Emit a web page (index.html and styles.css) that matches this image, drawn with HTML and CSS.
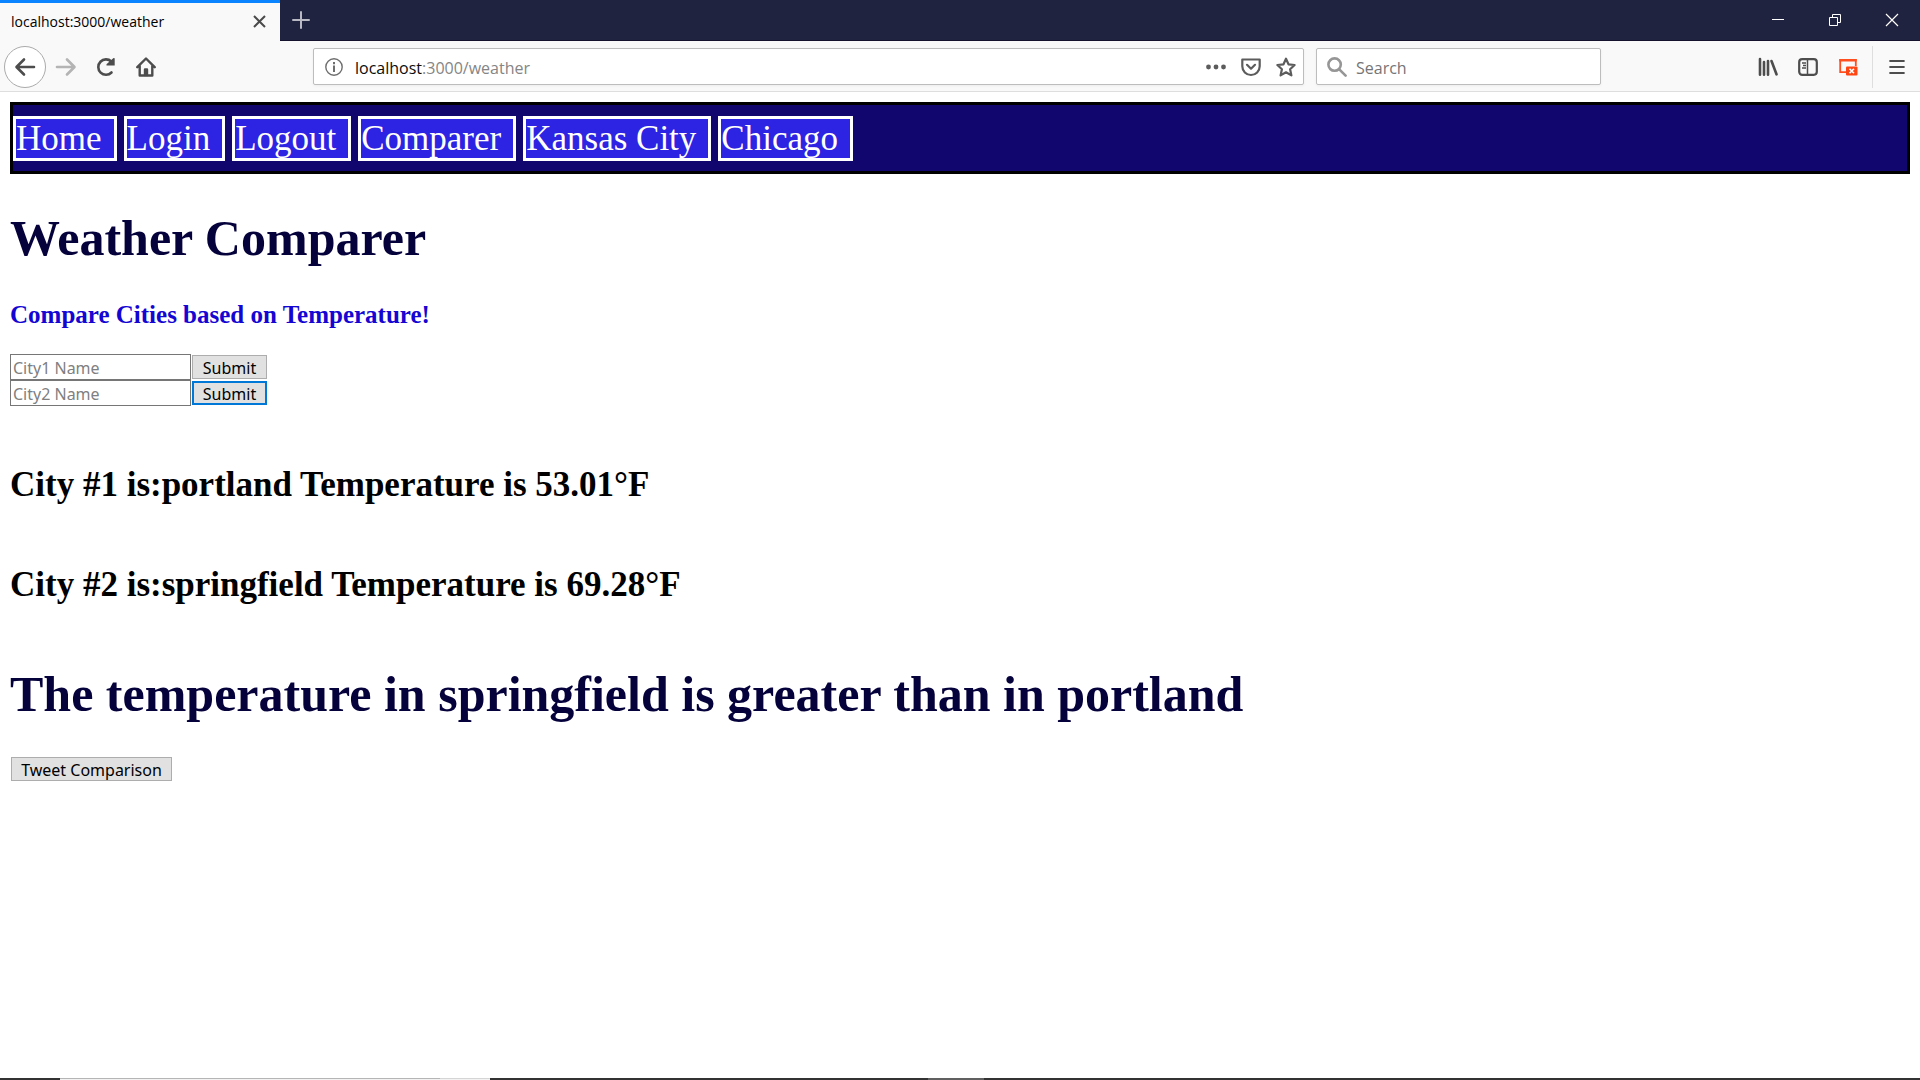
FILE: index.html
```html
<!DOCTYPE html>
<html lang="en">
<head>
<meta charset="utf-8">
<title>localhost:3000/weather</title>
<link rel="stylesheet" href="styles.css">
</head>
<body>
<header class="browser">
  <div class="tabbar">
    <div class="tab">
      <span>localhost:3000/weather</span>
      <button class="icon-btn" type="button" aria-label="Close tab"><svg width="13" height="13" viewBox="0 0 13 13"><path d="M1 1l11 11M12 1L1 12" stroke="#4a4a4a" stroke-width="2"/></svg></button>
    </div>
    <button class="icon-btn new-tab" type="button" aria-label="New tab"><svg width="18" height="18" viewBox="0 0 18 18"><path d="M9 1v16M1 9h16" stroke="#b9b9c4" stroke-width="2" stroke-linecap="round"/></svg></button>
    <div class="window-controls">
      <button class="icon-btn" type="button" aria-label="Minimize"><svg width="14" height="14" viewBox="0 0 14 14"><path d="M1 6.5h12" stroke="#fff"/></svg></button>
      <button class="icon-btn" type="button" aria-label="Restore"><svg width="14" height="14" viewBox="0 0 14 14" fill="none" stroke="#fff"><path d="M1.500 4.500h8v8h-8zM4.500 4.500v-3h8v8h-3"/></svg></button>
      <button class="icon-btn" type="button" aria-label="Close"><svg width="14" height="14" viewBox="0 0 14 14"><path d="M1 1l12 12M13 1L1 13" stroke="#fff" stroke-width="1.200"/></svg></button>
    </div>
  </div>
  <div class="toolbar">
    <div class="nav-buttons">
      <button class="icon-btn back" type="button" aria-label="Back"><svg width="22" height="20" viewBox="0 0 22 20" fill="none" stroke="#4d4d4d" stroke-width="2.600" stroke-linecap="round" stroke-linejoin="round"><path d="M20 10H3M10 2.500L2.500 10l7.500 7.500"/></svg></button>
      <button class="icon-btn" type="button" aria-label="Forward"><svg width="22" height="20" viewBox="0 0 22 20" fill="none" stroke="#b4b4b4" stroke-width="2.600" stroke-linecap="round" stroke-linejoin="round"><path d="M2 10h17M12 2.500l7.500 7.500-7.500 7.500"/></svg></button>
      <button class="icon-btn" type="button" aria-label="Reload"><svg width="20" height="20" viewBox="0 0 20 20"><path d="M15.500 15.500A7.700 7.700 0 1 1 15.300 4.500" fill="none" stroke="#4d4d4d" stroke-width="2.600" stroke-linecap="round"/><path d="M18.700 1.200v7.300h-8.200v-1.200l7-6.300z" fill="#4d4d4d"/></svg></button>
      <button class="icon-btn" type="button" aria-label="Home"><svg width="20" height="20" viewBox="0 0 20 20" fill="none" stroke="#4d4d4d" stroke-width="2.400" stroke-linecap="round" stroke-linejoin="round"><path d="M1.300 10.200L10 1.500l8.700 8.700M3.700 9v9.500h12.600V9"/><path d="M9 18v-5.500h2V18" fill="#4d4d4d"/></svg></button>
    </div>
    <div class="field url">
      <svg width="18" height="18" viewBox="0 0 18 18"><circle cx="9" cy="9" r="8.200" fill="none" stroke="#6e6e6e" stroke-width="1.400"/><path d="M8 4h2v2.200H8zM8 7.500h2V14H8z" fill="#6e6e6e"/></svg>
      <a class="address" href="#"><span class="host">localhost</span>:3000/weather</a>
      <div class="url-actions">
        <button class="icon-btn" type="button" aria-label="Page actions"><svg width="20" height="20" viewBox="0 0 20 20" fill="#5c5c5c"><circle cx="2.500" cy="10" r="2.400"/><circle cx="10" cy="10" r="2.400"/><circle cx="17.500" cy="10" r="2.400"/></svg></button>
        <button class="icon-btn" type="button" aria-label="Save to Pocket"><svg width="20" height="20" viewBox="0 0 20 20" fill="none" stroke="#5c5c5c" stroke-width="2.200" stroke-linecap="round" stroke-linejoin="round"><path d="M1.300 2.500h17.400v6.800a8.700 8.700 0 0 1-17.400 0z"/><path d="M6 7.800l4 3.900 4-3.900"/></svg></button>
        <button class="icon-btn" type="button" aria-label="Bookmark"><svg width="20" height="20" viewBox="0 0 20 20" fill="none" stroke="#5c5c5c" stroke-width="2.200" stroke-linejoin="round"><path d="M10 1.700l2.500 5.600 6.100.7-4.500 4.200 1.300 6.200-5.400-3.100-5.400 3.100 1.300-6.200L1.400 8l6.100-.7z"/></svg></button>
      </div>
    </div>
    <label class="field search">
      <svg width="20" height="20" viewBox="0 0 20 20" fill="none" stroke="#969696" stroke-width="2.600" stroke-linecap="round"><circle cx="7.600" cy="7.600" r="6.200"/><path d="M12.300 12.300l6.300 6.300"/></svg>
      <input type="text" placeholder="Search" aria-label="Search">
    </label>
    <div class="tools">
      <button class="icon-btn" type="button" aria-label="Library"><svg width="20" height="20" viewBox="0 0 20 20" stroke="#4d4d4d" stroke-width="2.600" stroke-linecap="round"><path d="M2 2v15.800M6 5v12.800M10 4v13.800M13.500 4l5 13.300"/></svg></button>
      <button class="icon-btn" type="button" aria-label="Sidebars"><svg width="20" height="20" viewBox="0 0 20 20" fill="none" stroke="#4d4d4d" stroke-width="2.200"><rect x="1.200" y="2.200" width="17.600" height="15.600" rx="3"/><path d="M9.500 2v16" stroke-width="1.500"/><path d="M4 6h4M5 8.500h3M4 11h4" stroke-width="1.300"/></svg></button>
      <button class="icon-btn" type="button" aria-label="Blocked window"><svg width="20" height="20" viewBox="0 0 20 20"><path d="M8 15.200H2.200V3h15.600v6" fill="none" stroke="#ff4f1f" stroke-width="1.800"/><path d="M1.300 2h17.400v2.500H1.300z" fill="#ff4f1f"/><rect x="8" y="9.500" width="11.500" height="9" rx="1" fill="#ff4512"/><path d="M11.500 11.700l4.500 4.500M16 11.700l-4.500 4.500" stroke="#fff" stroke-width="1.600"/></svg></button>
      <button class="icon-btn menu" type="button" aria-label="Open menu"><svg width="16" height="16" viewBox="0 0 16 16" stroke="#4d4d4d" stroke-width="2.200" stroke-linecap="round"><path d="M1.200 2h13.600M1.200 8h13.600M1.200 14h13.600"/></svg></button>
    </div>
  </div>
</header>

<main class="page">
  <nav class="site-nav">
    <a href="#">Home</a>
    <a href="#">Login</a>
    <a href="#">Logout</a>
    <a href="#">Comparer</a>
    <a href="#">Kansas City</a>
    <a href="#">Chicago</a>
  </nav>
  <h1>Weather Comparer</h1>
  <h3>Compare Cities based on Temperature!</h3>
  <form class="city-form">
    <input type="text" placeholder="City1 Name" aria-label="City 1 name">
    <button class="btn" type="button">Submit</button>
  </form>
  <form class="city-form">
    <input type="text" placeholder="City2 Name" aria-label="City 2 name">
    <button class="btn btn-active" type="button">Submit</button>
  </form>
  <div class="results">
    <h2>City #1 is:portland Temperature is 53.01°F</h2>
    <h2>City #2 is:springfield Temperature is 69.28°F</h2>
  </div>
  <h1>The temperature in springfield is greater than in portland</h1>
  <button class="btn btn-tweet" type="button">Tweet Comparison</button>
</main>

<footer class="taskbar">
  <span class="task-search"></span>
  <span class="task-mic"></span>
  <span class="task-window"></span>
</footer>
</body>
</html>
```
FILE: styles.css
```css
* {
  box-sizing: border-box;
}

body {
  margin: 0;
  min-height: 100vh;
  display: flex;
  flex-direction: column;
  background: #fff;
  color: #000;
  font-family: "Liberation Serif", serif;
}

button,
input {
  font-family: "Noto Sans", sans-serif;
}

svg {
  display: block;
  flex: none;
}

.icon-btn {
  display: flex;
  align-items: center;
  justify-content: center;
  padding: 0;
  border: 0;
  background: none;
}

/* Browser frame */
.browser {
  font-family: "Open Sans", sans-serif;
}

.tabbar {
  display: flex;
  height: 41px;
  background: #202340;
  border-bottom: 1px solid #15122e;
}

.tab {
  display: flex;
  align-items: center;
  justify-content: space-between;
  width: 280px;
  height: 41px;
  padding: 0 14px 2px 11px;
  border-top: 3px solid #0a84ff;
  background: #f9f9fa;
  font-size: 14px;
}

.new-tab {
  width: 42px;
}

.window-controls {
  display: flex;
  margin-left: auto;
}

.window-controls .icon-btn {
  width: 57px;
}

.toolbar {
  display: flex;
  align-items: center;
  height: 51px;
  padding: 1px 0 0 4px;
  background: #f9f9fa;
  border-bottom: 1px solid #dedede;
}

.nav-buttons {
  display: flex;
  align-items: center;
}

.nav-buttons .icon-btn {
  width: 40px;
  height: 42px;
}

.nav-buttons .back {
  width: 42px;
  border: 1px solid #ababab;
  border-radius: 50%;
  background: #fff;
}

.field {
  display: flex;
  align-items: center;
  height: 37px;
  border: 1px solid #bdbdbd;
  border-radius: 2px;
  background: #fff;
  box-shadow: 0 1px 3px #0000000d;
}

.url {
  flex: 1;
  margin-left: 147px;
  padding: 0 7px 0 11px;
  gap: 12px;
}

.address {
  padding-top: 2px;
  color: #858585;
  font-size: 16px;
  text-decoration: none;
}

.host {
  color: #0c0c0d;
}

.url-actions {
  display: flex;
  gap: 15px;
  margin-left: auto;
}

.search {
  width: 285px;
  margin-left: 12px;
  padding: 0 10px;
  gap: 9px;
}

.search input {
  width: 100%;
  padding: 2px 0 0;
  border: 0;
  background: none;
  font-family: "Open Sans", sans-serif;
  font-size: 16px;
}

.search input::placeholder {
  color: #757575;
}

.tools {
  display: flex;
  align-items: center;
  margin-left: 147px;
}

.tools .icon-btn {
  width: 40px;
  height: 42px;
}

.tools .menu {
  width: 48px;
  margin-left: 4px;
  border-left: 1px solid #dedede;
}

/* Page */
.page {
  flex: 1;
  padding: 10px;
}

.site-nav {
  display: flex;
  gap: 7px;
  padding: 11px 0 10px;
  border: 3px solid #000;
  background: #10066e;
}

.site-nav a {
  padding-right: 12px;
  border: 3px solid #fff;
  background: #2d23e3;
  color: #fff;
  font-size: 35px;
  line-height: 39px;
  text-decoration: none;
}

h1 {
  margin: 36px 0 35px;
  color: #05023b;
  font-size: 50px;
  line-height: 56px;
}

h2 {
  margin: 0;
  font-size: 35px;
  line-height: 40px;
}

h3 {
  margin: 0 0 25px;
  color: #1405d3;
  font-size: 25px;
  line-height: 28px;
}

.city-form {
  display: flex;
  align-items: center;
  gap: 1px;
}

.city-form input {
  width: 181px;
  height: 26px;
  padding: 2px 2px 0;
  border: 1px solid #767676;
  font-size: 16px;
}

.city-form input::placeholder {
  color: #808080;
}

.btn {
  width: 75px;
  height: 24px;
  padding: 2px 0 0;
  border: 1px solid #adadad;
  background: #e1e1e1;
  color: #000;
  font-size: 16px;
  line-height: 20px;
}

.btn-active {
  border: 2px solid #0078d7;
  line-height: 18px;
}

.btn-tweet {
  width: 161px;
  margin-left: 1px;
}

.results {
  display: grid;
  gap: 60px;
  margin: 59px 0 61px;
}

/* Top edge of the desktop taskbar */
.taskbar {
  display: flex;
  height: 2px;
  padding-left: 60px;
  background: #333;
}

.task-search {
  width: 380px;
  border-top: 1px solid #b5b5b5;
  background: #f2f2f2;
}

.task-mic {
  width: 50px;
  border-top: 1px solid #d5d5d5;
  background: #f2f2f2;
}

.task-window {
  width: 56px;
  margin-left: 438px;
  background: #606060;
}
```
